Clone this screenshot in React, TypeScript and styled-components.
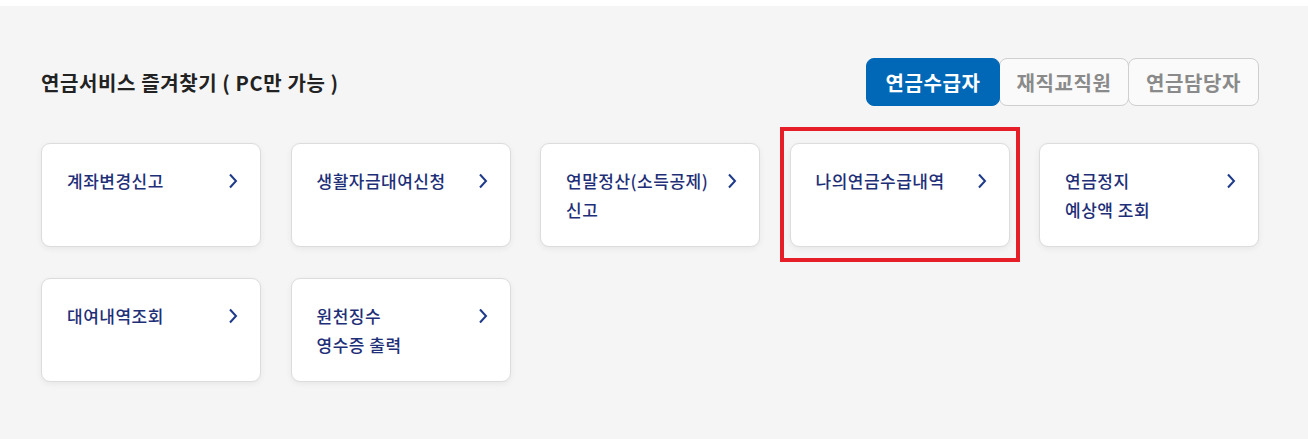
import React, { useState } from 'react'
import styled, { createGlobalStyle } from 'styled-components'

const GlobalStyle = createGlobalStyle`
  html, body {
    margin: 0;
    padding: 0;
    background: #fff;
  }
  body {
    font-family: 'Noto Sans CJK KR', 'Noto Sans', sans-serif;
  }
`

const Section = styled.section`
  margin-top: 6px;
  background: #f5f5f5;
  min-height: 433px;
  padding: 52px 49px 0 41px;
  box-sizing: border-box;
`

const Header = styled.div`
  display: flex;
  align-items: center;
  justify-content: space-between;
`

const Title = styled.h2`
  margin: 0;
  font-size: 20px;
  font-weight: 700;
  color: #222;
  letter-spacing: 0.6px;
  line-height: 1;
  padding-top: 2px;
`

const TabGroup = styled.div`
  display: flex;
`

const Tab = styled.button<{ $active?: boolean; $width: number }>`
  width: ${(p) => p.$width}px;
  height: 48px;
  padding: 0;
  margin-left: -1px;
  border-radius: 8px;
  border: 1px solid ${(p) => (p.$active ? '#0068b7' : '#cfcfcf')};
  background: ${(p) => (p.$active ? '#0068b7' : '#fafafa')};
  color: ${(p) => (p.$active ? '#fff' : '#8a8a8a')};
  font-family: inherit;
  font-size: 20px;
  font-weight: 700;
  letter-spacing: 0.6px;
  cursor: pointer;
  position: relative;
  z-index: ${(p) => (p.$active ? 1 : 0)};
  &:first-child {
    margin-left: 0;
  }
`

const Grid = styled.div`
  display: grid;
  grid-template-columns: repeat(5, 220px);
  column-gap: 29.5px;
  row-gap: 31px;
  margin-top: 37px;
`

const Card = styled.a`
  position: relative;
  display: flex;
  justify-content: space-between;
  align-items: flex-start;
  height: 104px;
  box-sizing: border-box;
  padding: 22px 22px 0 25px;
  background: #fff;
  border: 1px solid #dcdcdc;
  border-radius: 9px;
  box-shadow: 0 2px 6px rgba(0, 0, 0, 0.06);
  text-decoration: none;
  cursor: pointer;
`

const CardLabel = styled.span`
  font-size: 17px;
  font-weight: 500;
  line-height: 29px;
  color: #1e2f78;
  letter-spacing: 0.5px;
  white-space: pre-line;
`

const Arrow = styled.svg`
  flex: none;
  margin-top: 7px;
`

const Highlight = styled.span`
  position: absolute;
  top: -17px;
  left: -11px;
  right: -11px;
  bottom: -16px;
  border: 4px solid #e61e28;
  pointer-events: none;
`

const tabs = [
  { label: '연금수급자', width: 134 },
  { label: '재직교직원', width: 130 },
  { label: '연금담당자', width: 131 },
]

const items = [
  { label: '계좌변경신고' },
  { label: '생활자금대여신청' },
  { label: '연말정산(소득공제)\n신고' },
  { label: '나의연금수급내역', marked: true },
  { label: '연금정지\n예상액 조회' },
  { label: '대여내역조회' },
  { label: '원천징수\n영수증 출력' },
]

function Chevron() {
  return (
    <Arrow width="10" height="16" viewBox="0 0 10 16">
      <path d="M2 1.5 L8 8 L2 14.5" fill="none" stroke="#1e3a8a" strokeWidth="2" />
    </Arrow>
  )
}

export default function App() {
  const [active, setActive] = useState(0)

  return (
    <>
      <GlobalStyle />
      <Section>
        <Header>
          <Title>연금서비스 즐겨찾기 ( PC만 가능 )</Title>
          <TabGroup>
            {tabs.map((t, i) => (
              <Tab key={t.label} $width={t.width} $active={active === i} onClick={() => setActive(i)}>
                {t.label}
              </Tab>
            ))}
          </TabGroup>
        </Header>
        <Grid>
          {items.map((item) => (
            <Card key={item.label}>
              <CardLabel>{item.label}</CardLabel>
              <Chevron />
              {item.marked && <Highlight />}
            </Card>
          ))}
        </Grid>
      </Section>
    </>
  )
}
